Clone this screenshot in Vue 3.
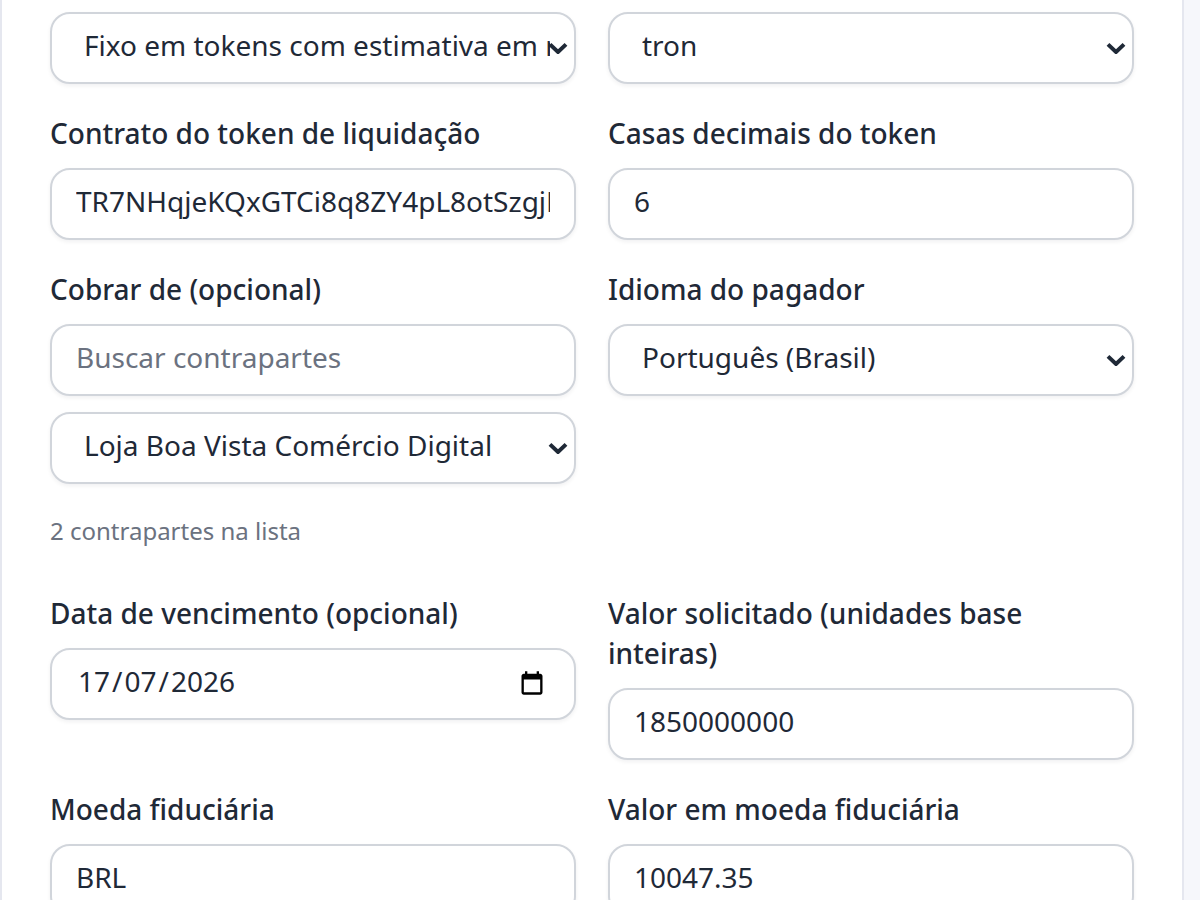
<script setup>
const chevron = "M1 1.2 5 5 9 1.2";
const dateParts = ["17", "07", "2026"];
</script>

<template>
  <div class="page">
    <main class="card">
      <div class="grid">
        <div class="field">
          <div class="wrap">
            <select class="control select">
              <option>Fixo em tokens com estimativa em moeda fiduciária</option>
            </select>
            <svg class="chevron" viewBox="0 0 10 6" aria-hidden="true"><path :d="chevron" /></svg>
          </div>
        </div>
        <div class="field">
          <div class="wrap">
            <select class="control select">
              <option>tron</option>
            </select>
            <svg class="chevron" viewBox="0 0 10 6" aria-hidden="true"><path :d="chevron" /></svg>
          </div>
        </div>

        <label class="field">
          <span class="label">Contrato do token de liquidação</span>
          <input class="control" value="TR7NHqjeKQxGTCi8q8ZY4pL8otSzgjLj6t" />
        </label>
        <label class="field">
          <span class="label">Casas decimais do token</span>
          <input class="control" value="6" />
        </label>

        <div class="field">
          <span class="label">Cobrar de (opcional)</span>
          <input class="control" placeholder="Buscar contrapartes" />
          <div class="wrap stacked">
            <select class="control select">
              <option>Loja Boa Vista Comércio Digital</option>
            </select>
            <svg class="chevron" viewBox="0 0 10 6" aria-hidden="true"><path :d="chevron" /></svg>
          </div>
          <span class="hint">2 contrapartes na lista</span>
        </div>
        <div class="field">
          <span class="label">Idioma do pagador</span>
          <div class="wrap">
            <select class="control select">
              <option>Português (Brasil)</option>
            </select>
            <svg class="chevron" viewBox="0 0 10 6" aria-hidden="true"><path :d="chevron" /></svg>
          </div>
        </div>

        <div class="field">
          <span class="label">Data de vencimento (opcional)</span>
          <div class="wrap">
            <div class="control date">
              <template v-for="(part, i) in dateParts" :key="part">
                <span v-if="i > 0">/</span>
                <span class="date-part">{{ part }}</span>
              </template>
            </div>
            <svg class="calendar" viewBox="0 0 24 24" aria-hidden="true">
              <path d="M6 2v2H5c-1.100 0-2 .9-2 2v14c0 1.100.9 2 2 2h14c1.100 0 2-.9 2-2V6c0-1.100-.9-2-2-2h-1V2h-2v2H8V2H6zM5 9h14v11H5V9z" />
            </svg>
          </div>
        </div>
        <label class="field">
          <span class="label">Valor solicitado (unidades base inteiras)</span>
          <input class="control" value="1850000000" />
        </label>

        <label class="field">
          <span class="label">Moeda fiduciária</span>
          <input class="control" value="BRL" />
        </label>
        <label class="field">
          <span class="label">Valor em moeda fiduciária</span>
          <input class="control" value="10047.35" />
        </label>
      </div>
    </main>
  </div>
</template>

<style scoped>
.page {
  zoom: 2;
  height: 450px;
  overflow: hidden;
  background: #f6f7fb;
  font-family: "Noto Sans", sans-serif;
  color: #1f2937;
}
.card {
  box-sizing: border-box;
  width: 592px;
  min-height: 520px;
  padding: 6px 24px 24px;
  background: #fff;
  border-left: 1px solid #e5e7ef;
  border-right: 1px solid #e5e7ef;
}
.grid {
  display: grid;
  grid-template-columns: 263px 263px;
  column-gap: 16px;
  row-gap: 14.5px;
  align-items: start;
}
.field {
  display: flex;
  flex-direction: column;
  min-width: 0;
}
.wrap {
  position: relative;
}
.label {
  font-size: 14px;
  font-weight: 500;
  line-height: 20px;
  margin-bottom: 7.5px;
}
.control {
  display: block;
  box-sizing: border-box;
  width: 100%;
  height: 36px;
  padding: 0 12px 3px;
  border: 1px solid #d1d5db;
  border-radius: 10px;
  background: #fff;
  box-shadow: 0 1px 2px rgba(15, 23, 42, 0.06);
  color: #1f2937;
  font-family: inherit;
  font-size: 14px;
  outline: none;
}
.control::placeholder {
  color: #6b7280;
  opacity: 1;
}
.select {
  appearance: none;
  padding: 0 12px 3px 16px;
}
.date {
  display: flex;
  align-items: center;
}
.date-part {
  padding: 0 1px;
}
.chevron {
  position: absolute;
  right: 4px;
  top: 15px;
  width: 10px;
  height: 6px;
  pointer-events: none;
  fill: none;
  stroke: #1f2937;
  stroke-width: 2;
}
.calendar {
  position: absolute;
  right: 15px;
  top: 10.5px;
  width: 14px;
  height: 14px;
  pointer-events: none;
  fill: #000;
}
.stacked {
  margin-top: 8px;
}
.hint {
  margin-top: 14.5px;
  margin-bottom: 7.5px;
  font-size: 12px;
  line-height: 18px;
  color: #6b7280;
}
</style>
